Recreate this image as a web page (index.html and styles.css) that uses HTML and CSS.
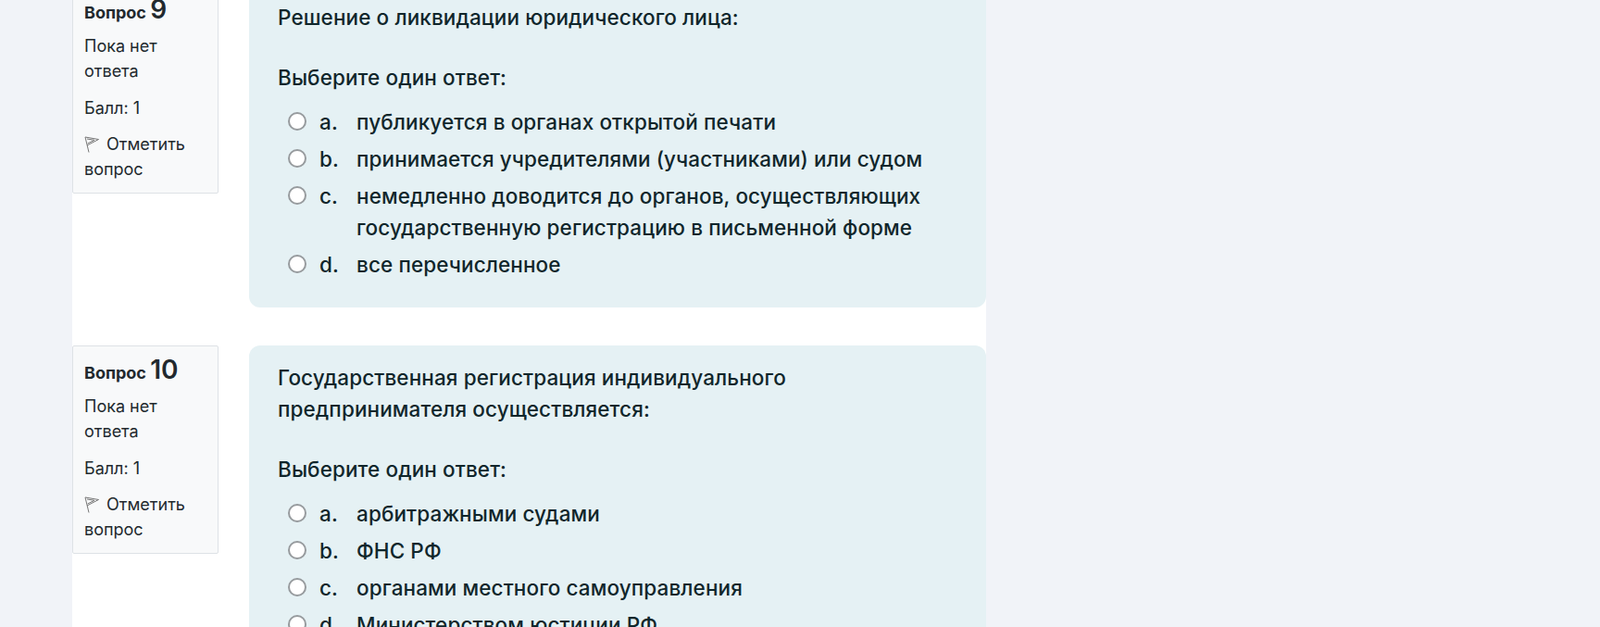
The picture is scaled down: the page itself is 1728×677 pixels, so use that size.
FILE: index.html
```html
<!DOCTYPE html>
<html lang="ru">
  <head>
    <meta charset="UTF-8" />
    <title>Тест</title>
    <link rel="stylesheet" href="styles.css">
  </head>
  <body>
    <div class="page">
      <div class="que">
        <div class="info">
          <h3 class="qno">Вопрос <span class="qnum">9</span></h3>
          <div class="state">Пока нет ответа</div>
          <div class="grade">Балл: 1</div>
          <div class="flag">
            <svg class="flag-icon" viewBox="0 0 16 18"><path d="M1 1L5 17.5M1 1L15.5 3.5L3 10M3 3L11 4.3L3.6 8" /></svg>
            Отметить вопрос
          </div>
        </div>
        <div class="content">
          <p class="qtext">Решение о ликвидации юридического лица:</p>
          <p class="prompt">Выберите один ответ:</p>
          <div class="answer">
            <div class="option"><span class="radio"></span><span class="letter">a.</span><span>публикуется в органах открытой печати</span></div>
            <div class="option"><span class="radio"></span><span class="letter">b.</span><span>принимается учредителями (участниками) или судом</span></div>
            <div class="option"><span class="radio"></span><span class="letter">c.</span><span>немедленно доводится до органов, осуществляющих государственную регистрацию в письменной форме</span></div>
            <div class="option"><span class="radio"></span><span class="letter">d.</span><span>все перечисленное</span></div>
          </div>
        </div>
      </div>
      <div class="que">
        <div class="info">
          <h3 class="qno">Вопрос <span class="qnum">10</span></h3>
          <div class="state">Пока нет ответа</div>
          <div class="grade">Балл: 1</div>
          <div class="flag">
            <svg class="flag-icon" viewBox="0 0 16 18"><path d="M1 1L5 17.5M1 1L15.5 3.5L3 10M3 3L11 4.3L3.6 8" /></svg>
            Отметить вопрос
          </div>
        </div>
        <div class="content">
          <p class="qtext">Государственная регистрация индивидуального предпринимателя осуществляется:</p>
          <p class="prompt">Выберите один ответ:</p>
          <div class="answer">
            <div class="option"><span class="radio"></span><span class="letter">a.</span><span>арбитражными судами</span></div>
            <div class="option"><span class="radio"></span><span class="letter">b.</span><span>ФНС РФ</span></div>
            <div class="option"><span class="radio"></span><span class="letter">c.</span><span>органами местного самоуправления</span></div>
            <div class="option"><span class="radio"></span><span class="letter">d.</span><span>Министерством юстиции РФ</span></div>
          </div>
        </div>
      </div>
    </div>
  </body>
</html>
```
FILE: styles.css
```css
html, body {
  height: 677px;
  overflow: hidden;
}
body {
  margin: 0;
  background: #f1f3f8;
  color: #10262b;
  font-family: Inter, "Noto Sans", sans-serif;
}
.page {
  width: 987px;
  margin: -16px 0 0 78px;
  background: #fff;
  display: flex;
  flex-direction: column;
  gap: 41px;
}
.que {
  display: flex;
  align-items: flex-start;
  gap: 33px;
}
.info {
  box-sizing: border-box;
  width: 158px;
  height: 225px;
  flex: none;
  padding: 10px 12px;
  background: #f8f9fa;
  border: 1px solid #dee2e6;
  border-radius: 2px;
  font-size: 18px;
  line-height: 27px;
  color: #22292e;
}
.qno {
  margin: 0 0 7px;
  font-size: 18px;
  font-weight: 700;
  line-height: 31px;
}
.qnum {
  font-size: 28px;
  font-weight: 600;
}
.state {
  margin-bottom: 13px;
}
.grade {
  margin-bottom: 12px;
}
.flag-icon {
  width: 16px;
  height: 18px;
  margin-right: 3px;
  vertical-align: -3px;
  fill: none;
  stroke: #777;
  stroke-width: 1;
}
.content {
  box-sizing: border-box;
  flex: 1;
  padding: 18px 31px 26px;
  background: #e5f1f4;
  border-radius: 12px;
  font-size: 22.5px;
  font-weight: 500;
  letter-spacing: 0.1px;
  line-height: 34px;
}
.qtext {
  margin: 0 0 31px;
}
.prompt {
  margin: 0 0 11px;
}
.option {
  display: flex;
  align-items: flex-start;
  padding: 3px 0;
}
.radio {
  box-sizing: border-box;
  flex: none;
  width: 20px;
  height: 20px;
  margin: 6px 14px 0 11px;
  background: #fff;
  border: 2px solid #979b9e;
  border-radius: 50%;
}
.letter {
  flex: none;
  width: 40px;
}
```
